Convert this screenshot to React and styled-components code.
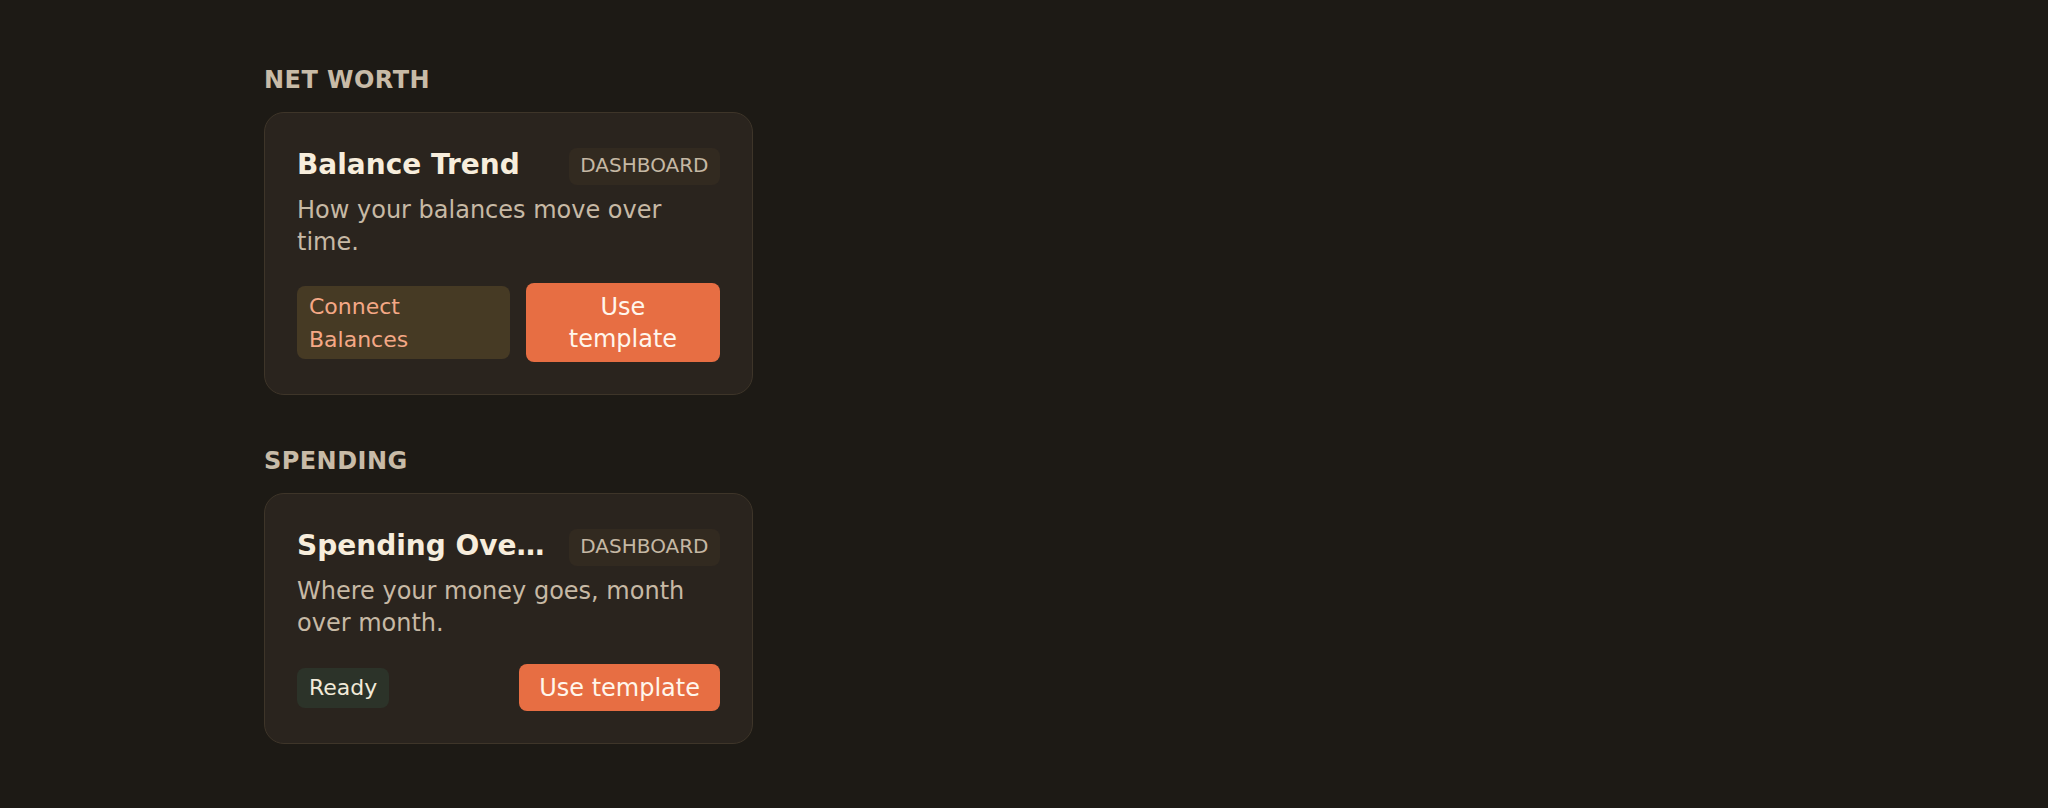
import React from "react";
import styled, { createGlobalStyle } from "styled-components";

const GlobalStyle = createGlobalStyle`
  html, body {
    margin: 0;
    padding: 0;
    background: #1d1a15;
  }
  body {
    font-family: "DejaVu Sans", "Noto Sans", sans-serif;
    min-height: 808px;
  }
  * { box-sizing: border-box; }
`;

const Page = styled.main`
  display: flex;
  flex-direction: column;
  padding: 66px 0 40px 264px;
`;

const Section = styled.section`
  display: flex;
  flex-direction: column;
  width: 489px;
  & + & {
    margin-top: 52px;
  }
`;

const SectionLabel = styled.h2`
  margin: 0 0 18px;
  font-size: 24px;
  line-height: 28px;
  font-weight: 700;
  letter-spacing: 0.45px;
  color: #c8bba7;
  text-transform: uppercase;
`;

const Card = styled.article`
  display: flex;
  flex-direction: column;
  background: #2a241e;
  border: 1px solid #3e3529;
  border-radius: 20px;
  padding: 35px 32px 32px;
`;

const CardHeader = styled.div`
  display: flex;
  align-items: flex-start;
  justify-content: space-between;
  gap: 16px;
`;

const Title = styled.h3`
  margin: 0;
  min-width: 0;
  font-size: 28px;
  line-height: 33px;
  font-weight: 700;
  color: #f7eddc;
  white-space: nowrap;
  overflow: hidden;
  text-overflow: ellipsis;
`;

const Badge = styled.span`
  flex-shrink: 0;
  padding: 4px 11.5px 6px;
  font-size: 20px;
  line-height: 27px;
  color: #c5b8a4;
  background: #322a20;
  border-radius: 8px;
  text-transform: uppercase;
`;

const Description = styled.p`
  margin: 9px 0 0;
  font-size: 24px;
  line-height: 32px;
  color: #c7b9a5;
`;

const Footer = styled.div`
  display: flex;
  align-items: center;
  justify-content: space-between;
  gap: 16px;
  margin-top: 25px;
`;

const tones = {
  warning: { bg: "#463a24", fg: "#f4a886" },
  ready: { bg: "#2c3329", fg: "#f1ead9" },
};

const Status = styled.span`
  flex: 0 1 auto;
  padding: 3.5px 12px;
  font-size: 22px;
  line-height: 33px;
  border-radius: 8px;
  background: ${(p) => tones[p.$tone].bg};
  color: ${(p) => tones[p.$tone].fg};
`;

const UseButton = styled.button`
  flex: 0 1 auto;
  padding: 7.5px 20px;
  border: 0;
  border-radius: 8px;
  background: #e76e43;
  color: #fff6ec;
  font-family: inherit;
  font-size: 24px;
  line-height: 32px;
  text-align: center;
  cursor: pointer;
`;

const templates = [
  {
    group: "Net Worth",
    title: "Balance Trend",
    description: "How your balances move over time.",
    status: "Connect Balances",
    tone: "warning",
  },
  {
    group: "Spending",
    title: "Spending Overview",
    description: "Where your money goes, month over month.",
    status: "Ready",
    tone: "ready",
  },
];

export default function App() {
  return (
    <>
      <GlobalStyle />
      <Page>
        {templates.map((t) => (
          <Section key={t.group}>
            <SectionLabel>{t.group}</SectionLabel>
            <Card>
              <CardHeader>
                <Title title={t.title}>{t.title}</Title>
                <Badge>Dashboard</Badge>
              </CardHeader>
              <Description>{t.description}</Description>
              <Footer>
                <Status $tone={t.tone}>{t.status}</Status>
                <UseButton>Use template</UseButton>
              </Footer>
            </Card>
          </Section>
        ))}
      </Page>
    </>
  );
}
